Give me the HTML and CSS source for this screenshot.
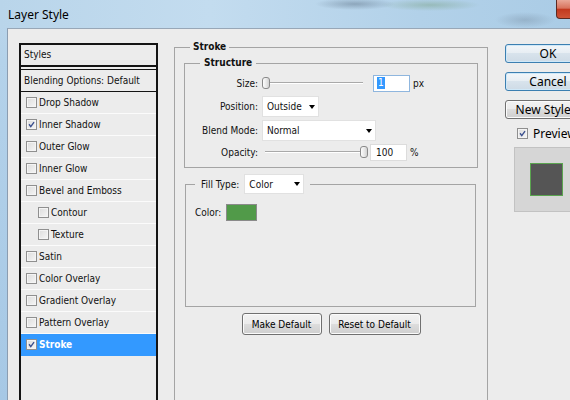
FILE: index.html
```html
<!DOCTYPE html>
<html lang="en">
<head>
<meta charset="utf-8">
<title>Layer Style</title>
<link rel="stylesheet" href="styles.css">
</head>
<body>
<div class="window">
  <div class="titlebar">
    <span class="title">Layer Style</span>
    <div class="close"></div>
  </div>
  <div class="client">
    <div class="styles">
      <div class="styles-head">Styles</div>
      <div class="styles-blend">Blending Options: Default</div>
      <ul class="fx-list">
        <li class="fx"><span class="cb"></span>Drop Shadow</li>
        <li class="fx"><span class="cb"><svg viewBox="0 0 11 11"><path d="M2.5 5.2 L4.6 8 L8.6 2.6"/></svg></span>Inner Shadow</li>
        <li class="fx"><span class="cb"></span>Outer Glow</li>
        <li class="fx"><span class="cb"></span>Inner Glow</li>
        <li class="fx"><span class="cb"></span>Bevel and Emboss</li>
        <li class="fx sub"><span class="cb"></span>Contour</li>
        <li class="fx sub"><span class="cb"></span>Texture</li>
        <li class="fx"><span class="cb"></span>Satin</li>
        <li class="fx"><span class="cb"></span>Color Overlay</li>
        <li class="fx"><span class="cb"></span>Gradient Overlay</li>
        <li class="fx"><span class="cb"></span>Pattern Overlay</li>
        <li class="fx selected"><span class="cb"><svg viewBox="0 0 11 11"><path d="M2.5 5.2 L4.6 8 L8.6 2.6"/></svg></span>Stroke</li>
      </ul>
    </div>

    <div class="main">
      <fieldset class="group stroke">
        <legend>Stroke</legend>
        <fieldset class="group structure">
          <legend>Structure</legend>
          <div class="row r-size">
            <span class="lbl">Size:</span>
            <div class="slider"><span class="thumb" style="margin-left:0px"></span></div>
            <div class="num num-size"><span class="sel">1</span></div>
            <span class="unit">px</span>
          </div>
          <div class="row r-pos">
            <span class="lbl">Position:</span>
            <div class="select sel-pos"><span>Outside</span><span class="arrow"></span></div>
          </div>
          <div class="row r-blend">
            <span class="lbl">Blend Mode:</span>
            <div class="select sel-blend"><span>Normal</span><span class="arrow"></span></div>
          </div>
          <div class="row r-opa">
            <span class="lbl">Opacity:</span>
            <div class="slider slider-opa"><span class="thumb" style="margin-left:95px"></span></div>
            <div class="num num-opa">100</div>
            <span class="unit">%</span>
          </div>
        </fieldset>

        <fieldset class="group fill">
          <legend><span>Fill Type:</span><div class="select sel-fill"><span>Color</span><span class="arrow"></span></div></legend>
          <div class="color-row">
            <span>Color:</span>
            <span class="swatch"></span>
          </div>
        </fieldset>

        <div class="btn-row">
          <button class="btn btn-make">Make Default</button>
          <button class="btn btn-reset">Reset to Default</button>
        </div>
      </fieldset>
    </div>

    <div class="side">
      <button class="btn btn-big btn-default">OK</button>
      <button class="btn btn-big btn-default">Cancel</button>
      <button class="btn btn-big btn-new">New Style...</button>
      <div class="preview-row">
        <span class="cb"><svg viewBox="0 0 11 11"><path d="M2.5 5.2 L4.6 8 L8.6 2.6"/></svg></span>
        <span>Preview</span>
      </div>
      <div class="preview-box"><div class="preview-square"></div></div>
    </div>
  </div>
</div>
</body>
</html>
```

FILE: styles.css
```css
* { box-sizing: border-box; }
html, body { margin: 0; padding: 0; overflow: hidden; }
body {
  width: 570px;
  height: 400px;
  font-family: "DejaVu Sans Condensed", "DejaVu Sans", sans-serif;
  font-stretch: condensed;
  font-size: 10px;
  color: #111;
}

.window {
  width: 600px;
  height: 400px;
  display: flex;
  flex-direction: column;
  background: linear-gradient(to bottom, #bdd7eb 0, #b4d2ea 60px, #a6c8e5 400px);
}

.titlebar {
  height: 28px;
  flex: none;
  display: flex;
  align-items: flex-start;
  background:
    radial-gradient(ellipse 40px 6px at 355px 4px, rgba(90,110,130,0.45), rgba(90,110,130,0) 100%),
    radial-gradient(ellipse 50px 6px at 430px 5px, rgba(120,160,130,0.45), rgba(120,160,130,0) 100%),
    radial-gradient(ellipse 30px 8px at 525px 20px, rgba(110,130,150,0.35), rgba(110,130,150,0) 100%),
    linear-gradient(to right, #b9d5ea 0, #c3dcef 35%, #b2d1e9 70%, #a9cbe5 100%);
}

.title {
  font-family: "Noto Sans", "DejaVu Sans", sans-serif;
  font-stretch: normal;
  font-size: 12px;
  line-height: 17px;
  color: #000;
  margin: 6px 0 0 8px;
}

.close {
  margin-left: auto;
  margin-right: 1px;
  width: 43px;
  height: 19px;
  border: 1px solid #5c2a22;
  border-top: none;
  border-radius: 0 0 4px 4px;
  background: linear-gradient(to bottom, #e9a898 0, #d8735d 45%, #c2391f 52%, #cf5437 100%);
}

.client {
  flex: 1;
  min-height: 0;
  margin-left: 7px;
  border-left: 1px solid #8b9db1;
  border-top: 1px solid #98a7b7;
  background: #ececec;
  display: flex;
  align-items: flex-start;
  overflow: hidden;
}

/* Styles list */
.styles {
  margin: 14px 0 0 11px;
  width: 139px;
  height: 400px;
  flex: none;
  border: 2px solid #141414;
  border-bottom: none;
}
.styles-head {
  height: 22px;
  line-height: 20px;
  padding-left: 3px;
  border-bottom: 2px solid #141414;
}
.styles-blend {
  margin-top: 2px;
  height: 23px;
  line-height: 21px;
  padding-left: 3px;
  border-top: 1px solid #141414;
  border-bottom: 1px solid #141414;
}
.fx-list { list-style: none; margin: 0; padding: 0; }
.fx {
  height: 22px;
  display: flex;
  align-items: center;
  padding-left: 5px;
  border-bottom: 1px solid #fbfbfb;
}
.fx.sub { padding-left: 17px; }
.fx.selected {
  background: #3399ff;
  color: #fff;
  font-weight: bold;
  border-bottom-color: #3399ff;
}

.cb {
  width: 11px;
  height: 11px;
  flex: none;
  margin-right: 2px;
  border: 1px solid #8f8f8f;
  background: linear-gradient(135deg, #dcdcdc 0, #f6f6f6 100%);
  box-shadow: inset 0 0 0 1px #f4f4f4;
  display: flex;
}
.cb svg { width: 9px; height: 9px; }
.cb path { fill: none; stroke: #3a4f8e; stroke-width: 1.7; }

/* Main column */
.main {
  margin: 11px 0 0 16px;
  width: 314px;
  flex: none;
}
fieldset.group {
  margin: 0;
  border: 1px solid #a4a4a4;
  min-width: 0;
}
fieldset.stroke { padding: 2px 9px 90px 9px; }
.stroke > legend {
  margin-left: 6px;
  padding: 0 3px;
  font-weight: bold;
  line-height: 14px;
}
fieldset.structure { padding: 4px 0 6px 0; }
.structure > legend {
  margin-left: 15px;
  padding: 0 4px;
  font-weight: bold;
  line-height: 14px;
}

.row { display: flex; align-items: center; }
.lbl { width: 73px; flex: none; text-align: right; margin-right: 4px; }
.r-size { height: 18px; }
.r-pos { height: 23px; margin-top: 3px; }
.r-blend { height: 23px; margin-top: 1px; }
.r-opa { height: 18px; margin-top: 1px; }

.slider {
  width: 104px;
  height: 14px;
  flex: none;
  display: flex;
  align-items: center;
  background:
    linear-gradient(#a9a9a9, #a9a9a9) no-repeat 1px 6px / 100px 1px,
    linear-gradient(#ffffff, #ffffff) no-repeat 1px 7px / 100px 1px;
}
.slider-opa { margin-left: 3px; width: 101px; background:
    linear-gradient(#a9a9a9, #a9a9a9) no-repeat 0 6px / 100px 1px,
    linear-gradient(#ffffff, #ffffff) no-repeat 0 7px / 100px 1px; }
.thumb {
  width: 8px;
  height: 12px;
  flex: none;
  border: 1px solid #8a8a8a;
  border-radius: 3px;
  background: linear-gradient(to right, #fdfdfd 0, #e6e6e6 60%, #d2d2d2 100%);
}

.num {
  width: 37px;
  height: 17px;
  flex: none;
  margin-left: 7px;
  background: #fff;
  border: 1px solid #c9c9c9;
  display: flex;
  align-items: center;
  padding-left: 3px;
}
.num-size { border-color: #8fb6de; }
.num-opa { margin-left: 4px; padding-left: 5px; border-color: #dcdcdc; }
.sel { background: #3399ff; color: #fff; padding: 0 1px; line-height: 12px; }
.unit { margin-left: 3px; }

.select {
  height: 21px;
  flex: none;
  display: flex;
  align-items: center;
  justify-content: space-between;
  background: #fff;
  border: 1px solid #e1e1e1;
  padding: 0 3px 0 4px;
}
.sel-pos { width: 57px; }
.sel-blend { width: 114px; }
.arrow {
  width: 0;
  height: 0;
  border-top: 4px solid #000;
  border-left: 3.5px solid transparent;
  border-right: 3.5px solid transparent;
}

fieldset.fill { margin: 6px 2px 0 1px; padding: 10px 0 85px 9px; }
.fill > legend {
  padding: 0 6px;
  display: flex;
  align-items: center;
}
.sel-fill { width: 60px; height: 20px; margin-left: 5px; }
.color-row { height: 17px; display: flex; align-items: center; }
.swatch {
  width: 31px;
  height: 17px;
  margin-left: 5px;
  border: 1px solid #8a8a8a;
  background: #519a49;
}

.btn {
  font-family: "DejaVu Sans Condensed", "DejaVu Sans", sans-serif;
  font-stretch: condensed;
  font-size: 10px;
  color: #000;
  border: 1px solid #707070;
  border-radius: 3px;
  background: linear-gradient(to bottom, #f2f2f2 0, #ebebeb 50%, #dddddd 50%, #cfcfcf 100%);
  box-shadow: inset 0 0 0 1px #fbfbfb;
  padding: 0;
  margin: 0;
}
.btn-row {
  margin-top: 6px;
  display: flex;
  justify-content: center;
  gap: 7px;
}
.btn-make { width: 80px; height: 22px; }
.btn-reset { width: 92px; height: 22px; }

/* Side column */
.side {
  margin: 15px 0 0 17px;
  width: 86px;
  flex: none;
  display: flex;
  flex-direction: column;
}
.btn-big {
  height: 19px;
  font-family: "Noto Sans", "DejaVu Sans", sans-serif;
  font-stretch: normal;
  font-size: 12px;
  line-height: 15px;
  margin-bottom: 9px;
}
.btn-default {
  border-color: #3c7fb1;
  background: linear-gradient(to bottom, #f3f6f9 0, #e6edf3 50%, #d8e3ec 50%, #cedbe6 100%);
  box-shadow: inset 0 0 0 1px #cfe8f8;
}
.btn-new { margin-bottom: 5px; }
.preview-row {
  height: 18px;
  display: flex;
  align-items: center;
  padding-left: 12px;
  font-family: "Noto Sans", "DejaVu Sans", sans-serif;
  font-stretch: normal;
  font-size: 12px;
  color: #000;
}
.preview-row .cb { margin-right: 5px; }
.preview-box {
  margin: 5px 0 0 9px;
  width: 65px;
  height: 65px;
  background: #d6d6d6;
  border: 1px solid #c2c2c2;
  display: flex;
  align-items: center;
  justify-content: center;
}
.preview-square {
  width: 33px;
  height: 33px;
  background: #555555;
  border: 1px solid #5aa44f;
}
```
